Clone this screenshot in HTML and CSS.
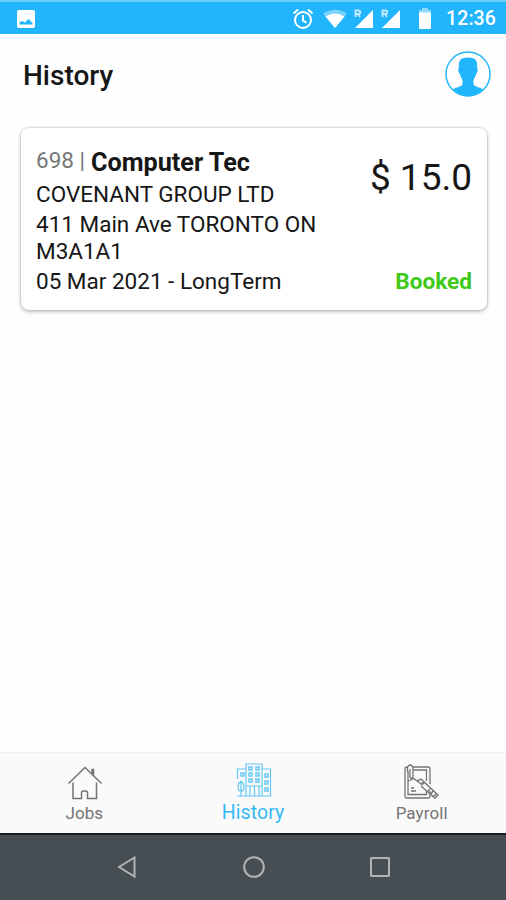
FILE: index.html
```html
<!DOCTYPE html>
<html lang="en">
<head>
<meta charset="utf-8">
<title>History</title>
<link rel="stylesheet" href="styles.css">
</head>
<body>
<div class="screen">
  <div class="status">
    <svg class="photo" width="20" height="20" viewBox="0 0 20 20"><rect x="1" y="1" width="18" height="18" rx="2" fill="#fff"/><path d="M3.500 15.500v-2l2.500-1.500 3 1.500 3.500-3.500 4 4v1.500z" fill="#20b5fc"/></svg>
    <svg class="alarm" width="22" height="22" viewBox="0 0 22 22" fill="none" stroke="#fff" stroke-width="2"><circle cx="11" cy="12" r="8"/><path d="M1.500 5.500l4.500-4M20.500 5.500l-4.500-4M11 7v5.500l3.500 2.200"/></svg>
    <svg class="wifi" width="24" height="20" viewBox="0 0 24 20"><path d="M0 4.500Q12-3 24 4.500L12 19z" fill="#7ad3fd"/><path d="M2.500 7.500Q12 1.500 21.500 7.500L12 19z" fill="#fff"/></svg>
    <svg class="signal" width="20" height="20" viewBox="0 0 20 20"><path d="M19 1v18H1z" fill="#fff"/><path d="M0 0h8v9H0z" fill="#20b5fc"/><path d="M1.500 8V1.500h3a1.500 1.500 0 010 3.500h-3M4 5l2 3" fill="none" stroke="#c5ecff" stroke-width="1.800"/></svg>
    <svg class="signal" width="20" height="20" viewBox="0 0 20 20"><path d="M19 1v18H1z" fill="#fff"/><path d="M0 0h8v9H0z" fill="#20b5fc"/><path d="M1.500 8V1.500h3a1.500 1.500 0 010 3.500h-3M4 5l2 3" fill="none" stroke="#c5ecff" stroke-width="1.800"/></svg>
    <svg class="battery" width="14" height="22" viewBox="0 0 14 22"><path d="M4 0h6v2h3v3H1V2h3z" fill="#90dafd"/><path d="M1 4.500h12V20a1 1 0 01-1 1H2a1 1 0 01-1-1z" fill="#fff"/></svg>
    <span class="clock">12:36</span>
  </div>
  <header class="header">
    <h1>History</h1>
    <svg width="46" height="46" viewBox="0 0 46 46"><circle cx="23" cy="22" r="22" fill="#fff" stroke="#20b5fc" stroke-width="1.400" transform="translate(0 1)"/><path d="M17 7.500Q23 5.500 29 7.500C32 9 32.500 13 32 17c1.500 1 .5 5-1 6-.7 3-1.500 4.500-2.500 6v4c1.500 3.500 7 3 9.500 5.500Q31.500 45 23 45T8 38.500c2.500-2.500 8-2 9.500-5.500v-4c-1-1.500-1.800-3-2.500-6-1.500-1-2.500-5-1-6-.5-4 0-8 3-9.500z" fill="#20b5fc"/></svg>
  </header>
  <main>
    <article class="card">
      <div class="details">
        <div class="name"><span class="number">698 |</span><strong>Computer Tec</strong></div>
        <p>COVENANT GROUP LTD</p>
        <p>411 Main Ave TORONTO ON M3A1A1</p>
        <p>05 Mar 2021 - LongTerm</p>
      </div>
      <div class="summary"><span class="price">$ 15.0</span><span class="state">Booked</span></div>
    </article>
  </main>
  <nav class="tabs">
    <div class="tab">
      <svg width="36" height="36" viewBox="0 0 36 36" fill="none" stroke="#747474" stroke-width="1.500"><path d="M1.500 19.500L18 3.500l16.500 16M25 9.500V5.500h1.500v6M6 18.500V34.500h8.500V29q0-2 2-2h2q2 0 2 2v5.500H29.500v-16"/></svg>
      <span>Jobs</span>
    </div>
    <div class="tab active">
      <svg width="36" height="36" viewBox="0 0 36 36" fill="none" stroke="#64c8f6" stroke-width="1.200"><path d="M10 34V2h16v32M10 7H1.500v10M26 7h8.500v27H1M5 34V19M5 19c-4 3-4 10 0 10s4-7 0-10M14 34V24h9v10M18.500 24v10M11 24h15"/><path stroke-width="1.500" d="M13 5h3v3h-3zM20 5h3v3h-3zM13 11h3v3h-3zM20 11h3v3h-3zM13 17h3v3h-3zM20 17h3v3h-3zM5 11h3v3H5zM29 12h3v3h-3zM29 19h3v3h-3zM29 26h3v3h-3z"/></svg>
      <span>History</span>
    </div>
    <div class="tab">
      <svg class="sheet" width="36" height="36" viewBox="0 0 36 36" fill="none" stroke="#747474" stroke-width="1.300"><path d="M5 3H4Q2 3 2 5v27q0 2 2 2h21q2 0 2-2v-5M9 3h16q2 0 2 2v15M5 7v23.500h18.500V27M10 6h13.500v11M4.500 8V3Q7-1 10 3v10q-1.500 3-3 0V5M5 17l5-2M8 24h3M8 27h5"/><path d="M10 14l4 3 4-2 3 3M14 17l4 3 3-2 14 13-3 3-14-12M21 18l-2 3M27 25l-2 2M30 27l-2 3M33 30l-3 3" stroke-width="1.400"/></svg>
      <span>Payroll</span>
    </div>
  </nav>
  <footer class="system">
    <svg width="22" height="24" viewBox="0 0 22 24"><path d="M3 12L18.500 2.500v19z"/></svg>
    <svg width="24" height="24" viewBox="0 0 24 24"><circle cx="12" cy="12" r="9.800"/></svg>
    <svg width="22" height="22" viewBox="0 0 22 22"><rect x="2" y="2" width="18" height="18" rx=".5"/></svg>
  </footer>
</div>
</body>
</html>
```
FILE: styles.css
```css
* { box-sizing: border-box; }
body, h1, p { margin: 0; }
body { font-family: Roboto, sans-serif; background: #fefefe; color: #161616; }
svg { display: block; flex: none; }
.screen { height: 900px; display: flex; flex-direction: column; }
.status { height: 34px; padding: 1px 10px 0 16px; display: flex; align-items: center; background: #20b5fc; border-top: 2px solid #70cdfc; }
.photo { margin-right: auto; }
.alarm { margin-right: 9px; }
.wifi { margin-right: 7px; }
.signal { margin-right: 7px; }
.battery { margin: 0 14px 0 10px; }
.clock { color: #fff; font-size: 19.500px; font-weight: 500; line-height: 24px; letter-spacing: .1px; }
.header { height: 82px; padding: 0 15px 2px 23px; display: flex; align-items: center; justify-content: space-between; }
h1 { font-size: 28px; line-height: 32px; font-weight: 500; padding-top: 4px; }
main { flex: 1; padding: 12px 19px 0 21px; }
.card { height: 182px; padding: 16px 15px 14px; display: flex; justify-content: space-between; background: #fff; border-radius: 8px; box-shadow: 0 0 2px 1px #0002, 0 2px 4px #0003; }
.details { width: 300px; display: flex; flex-direction: column; gap: 3px; font-size: 22.500px; line-height: 27px; }
.name { height: 30px; display: flex; align-items: flex-start; margin-top: 4px; }
.name strong { font-size: 25.200px; line-height: 30px; }
.number { color: #777; margin: -1px 6px 0 0; }
.summary { display: flex; flex-direction: column; align-items: flex-end; justify-content: space-between; }
.price { font-size: 37px; line-height: 44px; margin-top: 12px; }
.state { font-size: 22.600px; line-height: 28px; font-weight: 700; color: #3ec916; }
.tabs { height: 81px; display: grid; grid-template-columns: repeat(3, 1fr); background: #fafafa; border-top: 1px solid #f2f2f2; }
.tab { display: flex; flex-direction: column; align-items: center; padding-top: 11px; color: #747474; font-size: 17px; line-height: 24px; letter-spacing: .1px; }
.tab svg { margin-bottom: 1px; position: relative; left: 1px; }
.tab .sheet { left: -1px; }
.tab.active { color: #35b9f5; font-size: 19.500px; padding-top: 9px; }
.tab.active svg { margin-bottom: 3px; }
.system { height: 67px; padding: 0 115px 1px 116px; display: flex; align-items: center; justify-content: space-between; background: #464d53; border-top: 2px solid #171b1e; }
.system svg { fill: none; stroke: #afb4b6; stroke-width: 2; }
```
